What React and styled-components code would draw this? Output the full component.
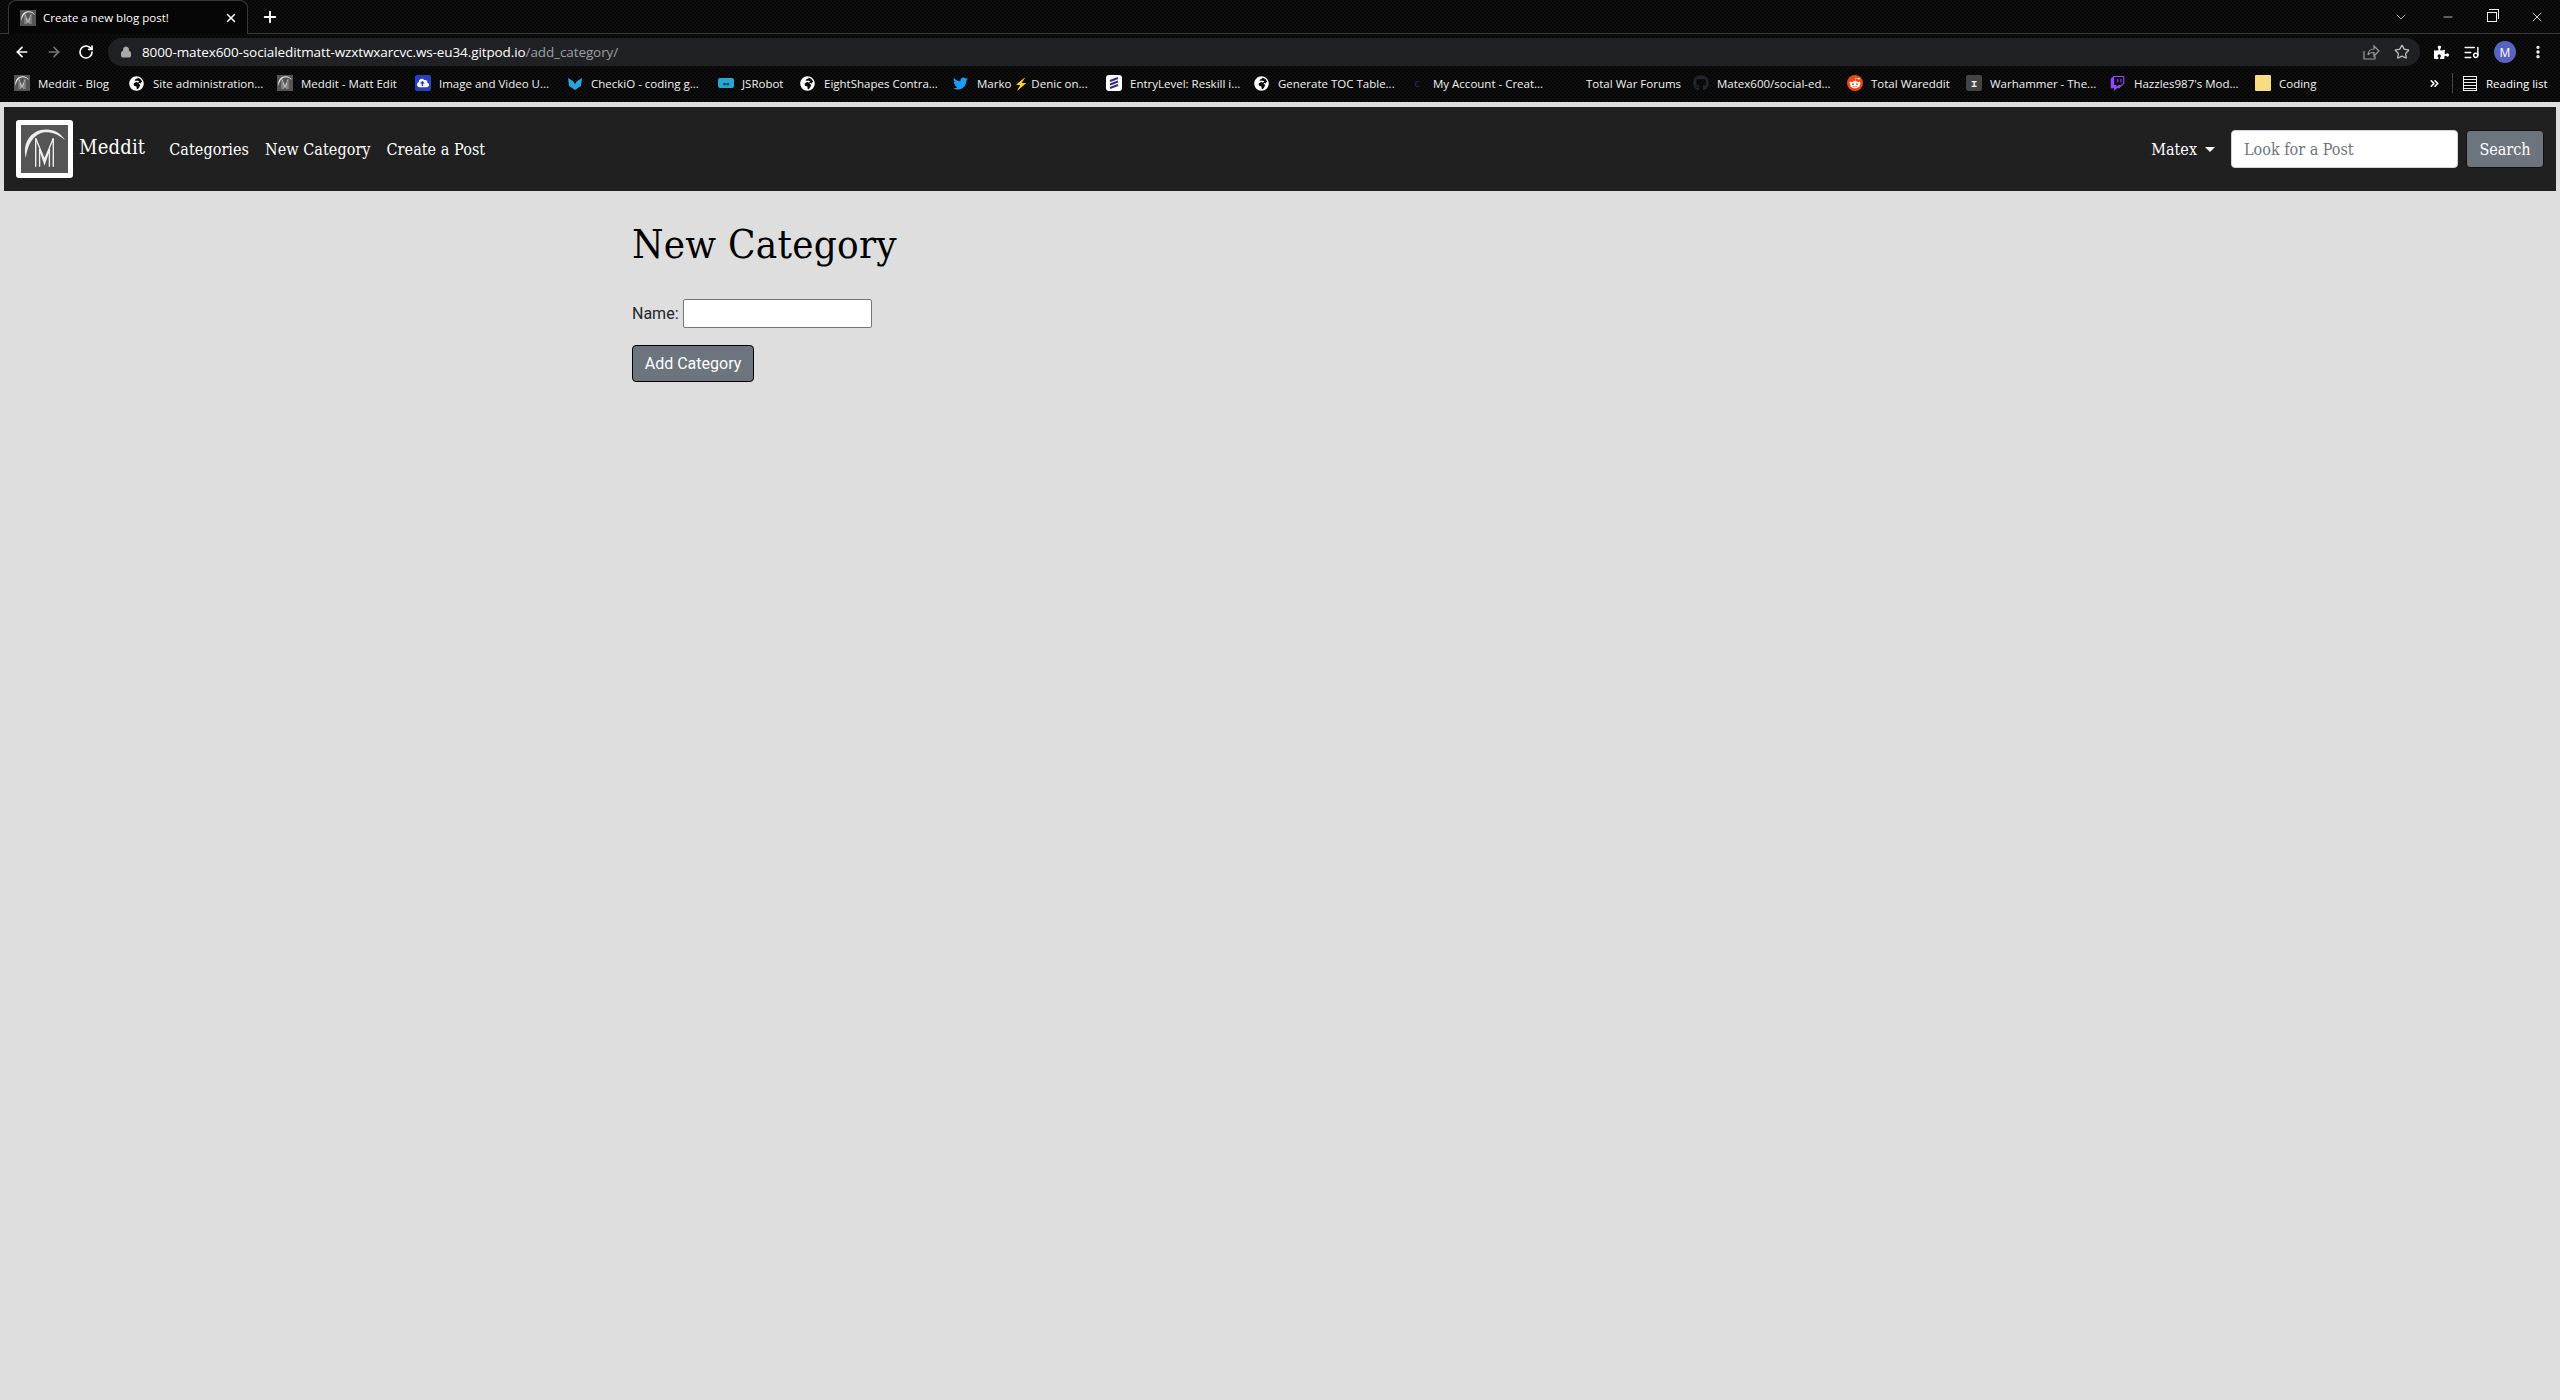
import React from "react";
import styled, { createGlobalStyle } from "styled-components";
import {
  ArrowLeft,
  ArrowRight,
  RotateCw,
  Lock,
  Plus,
  X,
  Minus,
  ChevronDown,
  Star,
  ListMusic,
  ChevronsRight,
  EllipsisVertical,
} from "lucide-react";
import {
  FaGlobeAfrica,
  FaTwitter,
  FaGithub,
  FaRedditAlien,
  FaTwitch,
  FaPuzzlePiece,
  FaCloudUploadAlt,
} from "react-icons/fa";

const SLAB = `"DejaVu Serif Condensed", "DejaVu Serif", "Liberation Serif", serif`;
const UI = `"Open Sans", "Noto Sans", "Liberation Sans", sans-serif`;

const GlobalStyle = createGlobalStyle`
  html, body {
    margin: 0;
    padding: 0;
    background: #dedede;
  }
  * { box-sizing: border-box; }
`;

const LogoMark = ({ size = 48 }) => (
  <svg width={size} height={size} viewBox="0 0 48 48">
    <rect width="48" height="48" fill="#555" />
    <path d="M5 33C1 18 10 4 26 4c8 0 15 4 19 11-7-6-13-8-19-8C14 7 7 18 5 33z" fill="#eee" />
    <path d="M15 42V13l9 22 9-22v29M19 42V24l5 15 5-15v18" fill="none" stroke="#eee" strokeWidth="1.4" />
  </svg>
);

const ShareIcon = () => (
  <svg width="18" height="18" viewBox="0 0 18 18" fill="none" stroke="#999" strokeWidth="1.2">
    <path d="M2 8v8h11v-3" />
    <path d="M6 12c0-4 3-6 6-6V3l5 5-5 5V9.500c-3 0-5 .5-6 2.500z" />
  </svg>
);

const CheckioIcon = () => (
  <svg width="16" height="16" viewBox="0 0 16 16">
    <path d="M1 3l5 3 2 3 2-3 5-3-1 8-6 4-6-4z" fill="#2aa3d8" />
  </svg>
);

const EntryLevelIcon = () => (
  <svg width="16" height="16" viewBox="0 0 16 16">
    <rect width="16" height="16" rx="3" fill="#fff" />
    <path d="M4 6l8-3M4 9.500l8-3M4 13l8-3" stroke="#332a88" strokeWidth="2" />
  </svg>
);

const Favicon = styled.span`
  width: 16px;
  height: 16px;
  flex: none;
  display: flex;
  align-items: center;
  svg { display: block; }
`;

const Earth = () => <FaGlobeAfrica size={15} color="#fff" />;

const Chrome = styled.header`
  height: 102px;
  background-color: #060606;
  background-image: linear-gradient(45deg, #0f0f0f 25%, transparent 25%, transparent 75%, #0f0f0f 75%),
    linear-gradient(45deg, #0f0f0f 25%, transparent 25%, transparent 75%, #0f0f0f 75%);
  background-size: 4px 4px;
  background-position: 0 0, 2px 2px;
  color: #fff;
  font-family: ${UI};
`;

const TabStrip = styled.div`
  height: 34px;
  display: flex;
  align-items: flex-end;
  padding-left: 8px;
  border-bottom: 1px solid #3a3a3a;
`;

const Tab = styled.div`
  width: 240px;
  height: 34px;
  margin-bottom: -1px;
  display: flex;
  align-items: center;
  gap: 7px;
  padding: 0 9px 0 11px;
  background: #060606;
  border: 1px solid #3a3a3a;
  border-bottom: none;
  border-radius: 8px 8px 0 0;
`;

const TabTitle = styled.span`
  flex: 1;
  font-size: 11.500px;
  white-space: nowrap;
`;

const NewTab = styled.span`
  display: flex;
  align-self: center;
  margin-left: 13px;
`;

const WindowControls = styled.div`
  margin-left: auto;
  align-self: center;
  display: flex;
  align-items: center;
  gap: 32px;
  padding-right: 15px;
`;

const Restore = styled.span`
  position: relative;
  width: 10px;
  height: 10px;
  border: 1px solid #eee;
  &::after {
    content: "";
    position: absolute;
    left: 1px;
    top: -4px;
    width: 9px;
    height: 9px;
    border-top: 1px solid #eee;
    border-right: 1px solid #eee;
  }
`;

const Toolbar = styled.div`
  height: 33px;
  display: flex;
  align-items: center;
  padding: 3px 0 0 14px;
`;

const NavIcons = styled.div`
  width: 94px;
  display: flex;
  gap: 16px;
  align-items: center;
`;

const Omnibox = styled.div`
  width: 2312px;
  height: 28px;
  border-radius: 14px;
  background: #202124;
  display: flex;
  align-items: center;
  padding: 0 10px 0 12px;
  gap: 10px;
  font-size: 13.500px;
`;

const Url = styled.span`
  flex: 1;
  color: #fff;
  letter-spacing: -0.1px;
  span { color: #9aa0a6; }
`;

const OmniIcons = styled.div`
  display: flex;
  align-items: center;
  gap: 14px;
`;

const ToolIcons = styled.div`
  display: flex;
  align-items: center;
  gap: 14px;
  margin-left: 14px;
`;

const Avatar = styled.span`
  width: 22px;
  height: 22px;
  border-radius: 50%;
  background: #5a64c0;
  font-size: 12px;
  display: flex;
  align-items: center;
  justify-content: center;
`;

const BookmarkBar = styled.div`
  height: 35px;
  display: flex;
  align-items: center;
  padding: 0 0 3px 14px;
`;

const Bookmark = styled.div`
  width: ${(p) => p.$w}px;
  flex: none;
  display: flex;
  align-items: center;
  gap: 8px;
  font-size: 11.500px;
  white-space: nowrap;
  color: #f1f1f1;
`;

const Overflow = styled.div`
  width: 24px;
  display: flex;
  align-items: center;
  margin-left: 112px;
`;

const ReadingList = styled.div`
  display: flex;
  align-items: center;
  gap: 9px;
  border-left: 1px solid #444;
  padding-left: 10px;
  height: 20px;
  font-size: 11.500px;
  white-space: nowrap;
`;

const ListIcon = styled.span`
  width: 14px;
  height: 15px;
  border: 1.5px solid #eee;
  background: repeating-linear-gradient(#060606 0 2px, #eee 2px 3px);
`;

const Square = styled.span`
  width: 16px;
  height: ${(p) => p.$h || 16}px;
  flex: none;
  background: ${(p) => p.$bg};
  border-radius: ${(p) => p.$r || 2}px;
  display: flex;
  align-items: center;
  justify-content: center;
  color: ${(p) => p.$fg || "#fff"};
  font-size: 9px;
  font-weight: 700;
`;

const Navbar = styled.nav`
  margin: 5px 4px 0;
  height: 84px;
  background: #212020;
  display: flex;
  align-items: center;
  padding: 0 12px;
  font-family: ${SLAB};
  color: #fff;
`;

const Brand = styled.a`
  display: flex;
  align-items: flex-start;
  gap: 6px;
  margin-right: 24px;
  font-size: 20px;
  letter-spacing: 0.2px;
  height: 58px;
`;

const BrandName = styled.span`
  margin-top: 15px;
`;

const LogoBox = styled.span`
  width: 57px;
  height: 58px;
  background: #555;
  border: 5px solid #fff;
  border-radius: 3px;
  display: flex;
  svg { width: 100%; height: 100%; }
`;

const NavLink = styled.a`
  font-size: 16px;
  letter-spacing: 0.06px;
  margin-right: 16px;
  white-space: nowrap;
`;

const UserMenu = styled.a`
  margin-left: auto;
  font-size: 16px;
  display: flex;
  align-items: center;
  margin-right: 16px;
  &::after {
    content: "";
    margin-left: 8px;
    border-top: 5px solid #fff;
    border-left: 5px solid transparent;
    border-right: 5px solid transparent;
  }
`;

const SearchForm = styled.form`
  display: flex;
  gap: 8px;
`;

const SearchInput = styled.input`
  width: 227px;
  height: 38px;
  border: 1px solid #ced4da;
  border-radius: 4px;
  padding: 0 12px;
  font-family: ${SLAB};
  font-size: 16px;
  &::placeholder { color: #6c757d; }
`;

const Button = styled.button`
  height: ${(p) => p.$h}px;
  width: ${(p) => p.$w}px;
  padding: 0;
  background: #6c757d;
  color: #fff;
  border: 1px solid ${(p) => p.$border};
  border-radius: 4px;
  font-size: 16px;
  font-family: ${(p) => p.$font};
`;

const Main = styled.main`
  width: 1320px;
  margin: 0 auto;
  padding: 29px 12px 0;
  font-family: Roboto, sans-serif;
  color: #212529;
  min-height: 1209px;
`;

const Title = styled.h1`
  margin: 0 0 31px;
  font-family: ${SLAB};
  font-weight: 400;
  font-size: 40px;
  letter-spacing: 0.25px;
  line-height: 48px;
  color: #000;
`;

const Field = styled.p`
  margin: 0 0 17px;
  font-size: 16px;
  line-height: 29px;
  display: flex;
  align-items: center;
  gap: 4px;
`;

const NameInput = styled.input`
  width: 189px;
  height: 29px;
  background: #fff;
  border: 1px solid #767676;
  border-radius: 2px;
`;

const bookmarks = [
  { label: "Meddit - Blog", w: 115, icon: <LogoMark size={16} /> },
  { label: "Site administration...", w: 148, icon: <Earth /> },
  { label: "Meddit - Matt Edit", w: 138, icon: <LogoMark size={16} /> },
  { label: "Image and Video U...", w: 152, icon: <Square $bg="#2b3fc4"><FaCloudUploadAlt size={12} /></Square> },
  { label: "CheckiO - coding g...", w: 151, icon: <CheckioIcon /> },
  { label: "JSRobot", w: 82, icon: <Square $bg="#25a7d8" $fg="#0a3040" $h={10}>▪▪</Square> },
  { label: "EightShapes Contra...", w: 153, icon: <Earth /> },
  { label: "Marko ⚡ Denic on...", w: 153, icon: <FaTwitter size={15} color="#1d9bf0" /> },
  { label: "EntryLevel: Reskill i...", w: 148, icon: <EntryLevelIcon /> },
  { label: "Generate TOC Table...", w: 155, icon: <Earth /> },
  { label: "My Account - Creat...", w: 153, icon: <Square $bg="transparent" $fg="#2a2140">C</Square> },
  { label: "Total War Forums", w: 131, icon: <Square $bg="transparent" /> },
  { label: "Matex600/social-ed...", w: 154, icon: <FaGithub size={16} color="#23272b" /> },
  { label: "Total Wareddit", w: 119, icon: <Square $bg="#f0450f" $r={8}><FaRedditAlien size={12} /></Square> },
  { label: "Warhammer - The...", w: 144, icon: <Square $bg="#444" $fg="#eee">Ɪ</Square> },
  { label: "Hazzles987's Mod...", w: 145, icon: <FaTwitch size={15} color="#9146ff" /> },
  { label: "Coding", w: 61, icon: <Square $bg="#f7dc83" $r={1} /> },
];

export default function App() {
  return (
    <>
      <GlobalStyle />
      <Chrome>
        <TabStrip>
          <Tab>
            <Favicon><LogoMark size={16} /></Favicon>
            <TabTitle>Create a new blog post!</TabTitle>
            <X size={14} strokeWidth={2.5} />
          </Tab>
          <NewTab><Plus size={18} strokeWidth={2.5} /></NewTab>
          <WindowControls>
            <ChevronDown size={16} strokeWidth={1} />
            <Minus size={14} strokeWidth={1.2} />
            <Restore />
            <X size={16} strokeWidth={1.2} />
          </WindowControls>
        </TabStrip>
        <Toolbar>
          <NavIcons>
            <ArrowLeft size={16} strokeWidth={2.5} />
            <ArrowRight size={16} strokeWidth={2.5} color="#777" />
            <RotateCw size={16} strokeWidth={2.5} />
          </NavIcons>
          <Omnibox>
            <Lock size={12} color="#aaa" fill="#aaa" />
            <Url>8000-matex600-socialeditmatt-wzxtwxarcvc.ws-eu34.gitpod.io<span>/add_category/</span></Url>
            <OmniIcons>
              <ShareIcon />
              <Star size={16} color="#bbb" />
            </OmniIcons>
          </Omnibox>
          <ToolIcons>
            <FaPuzzlePiece size={15} />
            <ListMusic size={17} />
            <Avatar>M</Avatar>
            <EllipsisVertical size={16} strokeWidth={3} />
          </ToolIcons>
        </Toolbar>
        <BookmarkBar>
          {bookmarks.map((b) => (
            <Bookmark key={b.label} $w={b.w}>
              <Favicon>{b.icon}</Favicon>
              {b.label}
            </Bookmark>
          ))}
          <Overflow>
            <ChevronsRight size={13} strokeWidth={3} />
          </Overflow>
          <ReadingList>
            <ListIcon />
            Reading list
          </ReadingList>
        </BookmarkBar>
      </Chrome>
      <Navbar>
        <Brand>
          <LogoBox><LogoMark /></LogoBox>
          <BrandName>Meddit</BrandName>
        </Brand>
        <NavLink>Categories</NavLink>
        <NavLink>New Category</NavLink>
        <NavLink>Create a Post</NavLink>
        <UserMenu>Matex</UserMenu>
        <SearchForm>
          <SearchInput placeholder="Look for a Post" />
          <Button type="button" $w={78} $h={38} $border="#111" $font={SLAB}>Search</Button>
        </SearchForm>
      </Navbar>
      <Main>
        <Title>New Category</Title>
        <Field>
          Name:
          <NameInput />
        </Field>
        <Button type="button" $w={122} $h={37} $border="#000" $font="Roboto, sans-serif">Add Category</Button>
      </Main>
    </>
  );
}
